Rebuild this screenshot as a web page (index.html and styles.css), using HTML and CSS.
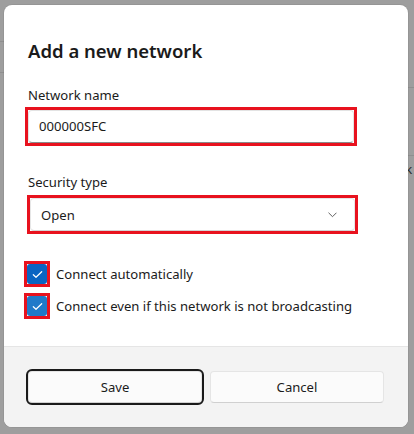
FILE: index.html
```html
<!DOCTYPE html>
<html>
<head>
<meta charset="utf-8">
<link rel="stylesheet" href="styles.css">
</head>
<body>
<div class="backdrop">
  <span class="bg-line l1"></span>
  <span class="bg-line l2"></span>
  <span class="bg-line r1"></span>
  <span class="bg-line r2"></span>
  <span class="bg-text">rk</span>
</div>
<div class="dialog">
  <div class="content">
    <h1 class="title">Add a new network</h1>
    <label class="label first">Network name</label>
    <div class="hl hl-text">
      <div class="textbox">000000SFC</div>
    </div>
    <label class="label second">Security type</label>
    <div class="hl hl-select">
      <div class="select">
        <span>Open</span>
        <svg class="chev" width="9" height="6" viewBox="0 0 9 6"><path d="M0.8 1 L4.5 4.7 L8.2 1" fill="none" stroke="#606060" stroke-width="1" stroke-linecap="round" stroke-linejoin="round"/></svg>
      </div>
    </div>
    <div class="checks">
      <div class="check-row">
        <span class="hl hl-box"><span class="box dark"><svg width="11" height="9" viewBox="0 0 11 9"><path d="M1.3 4.7 L4 7.3 L9.7 1.7" fill="none" stroke="#fff" stroke-width="1.2" stroke-linecap="round" stroke-linejoin="round"/></svg></span></span>
        <span class="check-label">Connect automatically</span>
      </div>
      <div class="check-row">
        <span class="hl hl-box"><span class="box light"><svg width="11" height="9" viewBox="0 0 11 9"><path d="M1.3 4.7 L4 7.3 L9.7 1.7" fill="none" stroke="#fff" stroke-width="1.2" stroke-linecap="round" stroke-linejoin="round"/></svg></span></span>
        <span class="check-label">Connect even if this network is not broadcasting</span>
      </div>
    </div>
  </div>
  <div class="footer">
    <button class="btn focus">Save</button>
    <button class="btn">Cancel</button>
  </div>
</div>
</body>
</html>
```
FILE: styles.css
```css
* { box-sizing: border-box; }
html, body { margin: 0; padding: 0; }
body {
  width: 414px;
  height: 434px;
  background: #9e9e9e;
  font-family: "Noto Sans", "Open Sans", sans-serif;
  color: #1b1b1b;
  position: relative;
  overflow: hidden;
}
.backdrop { position: absolute; inset: 0; }
.bg-line { position: absolute; height: 1px; background: #8f8f8f; }
.l1 { left: 0; top: 41px; width: 6px; }
.l2 { left: 0; top: 72px; width: 6px; }
.r1 { right: 0; top: 87px; width: 8px; }
.r2 { right: 0; top: 155px; width: 8px; }
.bg-text { position: absolute; left: 400px; top: 161px; font-size: 13px; line-height: 16px; color: #2a2a2a; }

.dialog {
  position: absolute;
  left: 4px;
  top: 5px;
  width: 404px;
  height: 422px;
  background: #ffffff;
  border-radius: 8px;
  overflow: hidden;
  display: flex;
  flex-direction: column;
  box-shadow: 0 0 0 1px rgba(0,0,0,0.05);
}
.content {
  flex: 1;
  padding: 32px 24px 0 24px;
  display: flex;
  flex-direction: column;
  align-items: flex-start;
}
.title {
  margin: 0;
  font-size: 18.5px;
  line-height: 28px;
  font-weight: 600;
  color: #1a1a1a;
}
.label {
  display: block;
  font-size: 13.1px;
  line-height: 20px;
}
.label.first { margin-top: 20px; }
.label.second { margin-top: 26px; }

.hl { border: 3px solid #e8121e; }
.hl-text { margin-top: 2px; margin-left: -3px; }
.hl-select { margin-top: 3px; margin-left: -1px; }

.textbox {
  width: 326px;
  height: 33px;
  border: 1px solid #e3e3e3;
  border-bottom: 1px solid #8a8a8a;
  border-radius: 4px;
  padding: 0 10px;
  font-size: 13.1px;
  line-height: 31px;
  background: #fff;
}
.select {
  width: 325px;
  height: 33px;
  border: 1px solid #e6e6e6;
  border-bottom-color: #d4d4d4;
  border-radius: 4px;
  padding: 0 17px 0 10px;
  font-size: 13.1px;
  display: flex;
  align-items: center;
  justify-content: space-between;
  background: #fff;
}
.checks {
  margin-top: 27px;
  margin-left: -4px;
  display: flex;
  flex-direction: column;
  gap: 6px;
}
.check-row {
  display: flex;
  align-items: center;
  gap: 6px;
  font-size: 13.1px;
  line-height: 20px;
}
.hl-box { display: flex; }
.box {
  width: 20px;
  height: 20px;
  border-radius: 3px;
  display: flex;
  align-items: center;
  justify-content: center;
}
.box.dark { background: #0a64c2; }
.box.light { background: #2079c9; }

.footer {
  height: 81px;
  background: #f3f3f3;
  border-top: 1px solid #e5e5e5;
  padding: 24px 24px 24px 24px;
  display: grid;
  grid-template-columns: 1fr 1fr;
  gap: 8px;
}
.btn {
  height: 32px;
  background: #fbfbfb;
  border: 1px solid #e5e5e5;
  border-bottom-color: #d0d0d0;
  border-radius: 4px;
  font-family: inherit;
  font-size: 13.1px;
  color: #1b1b1b;
}
.btn.focus { outline: 2px solid #1a1a1a; outline-offset: 0px; border-radius: 4px; }
```
